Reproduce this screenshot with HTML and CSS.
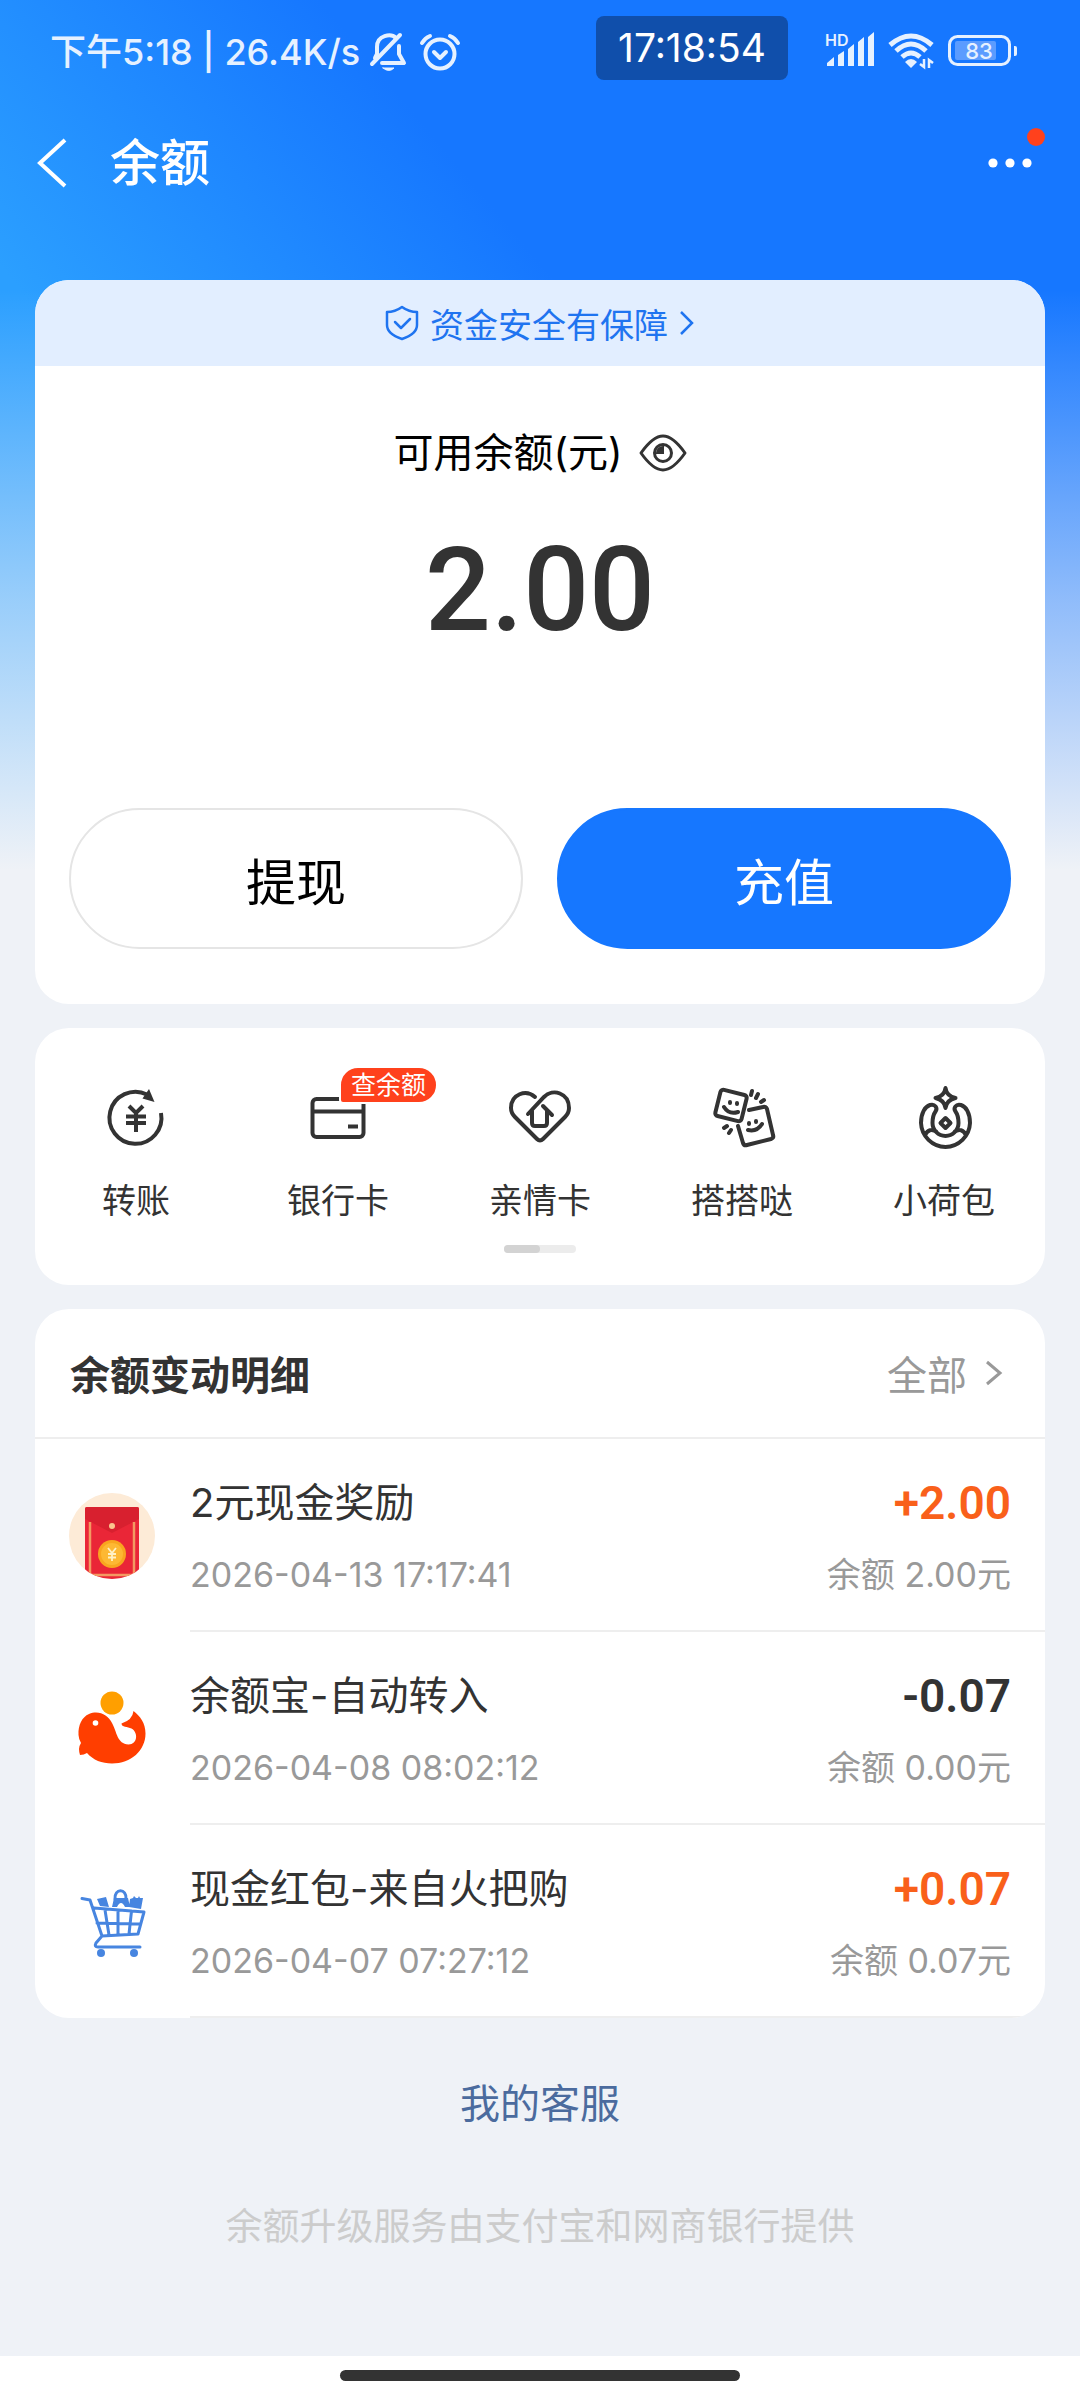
FILE: index.html
```html
<!DOCTYPE html>
<html lang="zh-CN">
<head>
<meta charset="utf-8">
<meta name="viewport" content="width=device-width, initial-scale=1">
<title>余额</title>
<link rel="stylesheet" href="styles.css">
</head>
<body>
<div class="page">
  <div class="status">
    <div class="status-left">
      <span>下午5:18 | 26.4K/s</span>
      <svg class="bell" width="36" height="40" viewBox="0 0 36 40" fill="none" stroke="currentColor" stroke-width="4" stroke-linecap="round" stroke-linejoin="round"><path d="M26 6C21 1 7 3 7 15v7l-2 4M29 14v8l5 9H12"/><path d="M2 32L30 3"/><path d="M13 36h11q-5 5-11 0z" fill="currentColor" stroke-width="1"/></svg>
      <svg class="alarm" width="40" height="38" viewBox="0 0 40 38" fill="none" stroke="currentColor" stroke-width="4" stroke-linecap="round"><circle cx="20" cy="21" r="14.500"/><path d="M14 19l6 6 6-6" stroke-linejoin="round"/><path d="M2 10q3-5 8-7M38 10q-3-5-8-7"/></svg>
    </div>
    <time class="clock">17:18:54</time>
    <div class="status-right">
      <svg width="50" height="36" viewBox="0 0 50 36" fill="currentColor"><text class="hd" x="0" y="13">HD</text><path d="M2 33v-3l7-6v9zM13 33V22l6-4v15zM23 33V16l6-5v22zM33 33V9l6-5v29zM43 33V4l6-5v34z"/></svg>
      <svg class="wifi" width="46" height="36" viewBox="0 0 46 36" fill="none" stroke="currentColor" stroke-width="5"><path d="M2 12Q23-6 44 12M8 18Q23 4 38 18M14 24Q23 16 32 24"/><path d="M17 29q6-6 12 0l-6 6z" fill="currentColor" stroke="none"/><path d="M36 26v8l-4-3M41 35v-8l4 3" stroke-width="2.500"/></svg>
      <svg class="battery" width="70" height="32" viewBox="0 0 70 32" fill="none"><rect x="1.500" y="1.500" width="60" height="28" rx="8" stroke="currentColor" stroke-width="3"/><rect x="7" y="6" width="41" height="19" rx="2" fill="#5b9cff"/><path d="M66 11h1q2 0 2 2v6q0 2-2 2h-1z" fill="currentColor"/><text class="level" x="31" y="24" text-anchor="middle" fill="currentColor">83</text></svg>
    </div>
  </div>

  <header class="nav">
    <button class="back" aria-label="返回"><svg width="30" height="50" viewBox="0 0 30 50" fill="none" stroke="currentColor" stroke-width="4"><path d="M28 2L3 25l25 23"/></svg></button>
    <h1>余额</h1>
    <button class="more" aria-label="更多"><svg width="46" height="12" viewBox="0 0 46 12" fill="currentColor"><circle cx="6" cy="6" r="4.600"/><circle cx="23" cy="6" r="4.600"/><circle cx="40" cy="6" r="4.600"/></svg><span class="dot"></span></button>
  </header>

  <main>
    <section class="card">
      <a class="safety" href="#">
        <svg width="34" height="36" viewBox="0 0 34 36" fill="none" stroke="currentColor" stroke-width="2.500" stroke-linejoin="round"><path d="M17 2q7 5 15 5v13q0 9-15 14Q2 29 2 20V7q8 0 15-5z"/><path d="M10 17l6 6 9-9" stroke-linecap="round"/></svg>
        <span>资金安全有保障</span>
        <svg width="16" height="24" viewBox="0 0 16 24" fill="none" stroke="currentColor" stroke-width="2.500"><path d="M2 1l11 11L2 23"/></svg>
      </a>
      <div class="label">
        <span>可用余额(元)</span>
        <button class="eye" aria-label="隐藏余额"><svg width="48" height="38" viewBox="0 0 48 38" fill="none" stroke="currentColor" stroke-width="3"><path d="M2 19Q14 2 24 2t22 17Q34 36 24 36T2 19z" stroke-linejoin="round"/><circle cx="24" cy="19" r="8.500"/><path d="M24 13v6h-6a6 6 0 0 1 6-6z" fill="currentColor" stroke-width="2"/></svg></button>
      </div>
      <p class="amount">2.00</p>
      <div class="actions">
        <button class="btn">提现</button>
        <button class="btn primary">充值</button>
      </div>
    </section>

    <section class="card shortcuts">
      <nav class="grid">
        <a href="#"><span class="icon"><svg viewBox="0 0 72 72"><path d="M61 31A26 26 0 1 1 47 12.500M29 24l7 7 7-7M36 31v19M26 34.500h20M26 41h20"/><path d="M49 7l5.500 13-12-3.500z" fill="currentColor" stroke="none"/></svg></span>转账</a>
        <a href="#"><span class="icon"><svg viewBox="0 0 72 72"><rect x="10.500" y="17" width="51" height="38" rx="4"/><path d="M10 29.500h52M46 44.500h10"/></svg><em class="badge">查余额</em></span>银行卡</a>
        <a href="#"><span class="icon"><svg viewBox="0 0 72 72" stroke-linecap="round"><path d="M31 15C22 7 7 12 7 26q0 5 4 9l22 22q3 3 6 0l22-22q4-4 4-9C65 11 49 6 40 15L24 32"/><path d="M28 29v12q0 3 3 3h9q3 0 3-3V29M39 24l9 9"/></svg></span>亲情卡</a>
        <a href="#"><span class="icon"><svg viewBox="0 0 72 72" stroke-linecap="round"><rect x="11.500" y="10" width="27" height="27" rx="3" transform="rotate(14 25 23.500)"/><path d="M43 28l14-3q3-1 4 2l6 26q1 3-2 4l-24 6q-3 1-4-2l-5-17"/><path d="M18 25q5 8 14 5M42 48q9 2 14-6"/><path d="M24 20v1M31 21v1M43 41v1M50 39v1M46 9l-1 4M52 12l-2 4M58 18l-3 2M21 44l-3 2M25 48l-2 3"/></svg></span>搭搭哒</a>
        <a href="#"><span class="icon"><svg viewBox="0 0 72 72" stroke-linejoin="round"><path d="M37.500 65A25 25 0 0 1 13 41C13 31 17 24.500 22 23s8 3 5.500 6.500-3 7-3 11.500a13 13 0 0 0 26 0c0-5-.5-8-3-11.500S48 21.500 53 23s9 8 9 18a25 25 0 0 1-24.500 24zM17 53q4-8 12-3M58 53q-4-8-12-3M37.500 36l5 5-5 5-5-5z"/><path d="M37.500 6q1 8 10 10-9 2-10 10-1-8-10-10 9-2 10-10z"/></svg></span>小荷包</a>
      </nav>
      <div class="pager"><span></span></div>
    </section>

    <section class="card">
      <header class="list-head">
        <h2>余额变动明细</h2>
        <a href="#">全部 <svg width="18" height="26" viewBox="0 0 18 26" fill="none" stroke="currentColor" stroke-width="3"><path d="M2 2l13 11L2 24"/></svg></a>
      </header>
      <ul class="list">
        <li>
          <svg class="avatar" viewBox="0 0 86 86"><defs><clipPath id="round"><circle cx="43" cy="43" r="43"/></clipPath></defs><g clip-path="url(#round)"><path fill="#fdebd7" d="M0 0h86v86H0z"/><rect x="16" y="14" width="54" height="76" rx="2" fill="#ea2637"/><path d="M16 16q0-2 2-2h50q2 0 2 2v10L43 40 16 26z" fill="#d8202f"/><path d="M21 29v53M65 29v53M18 82h50" stroke="#f39a62" stroke-width="2.500"/><circle cx="43" cy="33" r="3" fill="#fbc58e"/><circle cx="43" cy="61" r="14" fill="#f9a51f"/><circle cx="43" cy="61" r="11" fill="#fdb833"/><path d="M39 55l4 5 4-5M43 60v8M39 61h8M39 64.500h8" stroke="#fff1c4" stroke-width="1.800" fill="none"/></g></svg>
          <div class="row">
            <div class="what"><h3>2元现金奖励</h3><time>2026-04-13 17:17:41</time></div>
            <div class="sum"><b class="in">+2.00</b><span>余额 2.00元</span></div>
          </div>
        </li>
        <li>
          <svg class="avatar" viewBox="0 0 86 86"><circle cx="43" cy="17" r="11.500" fill="#ff9f00"/><path fill="#ff3e00" d="M20 28C13 31 9 39 9.500 49q.2 4 2.500 8-2 3-2 6 0 3 1 6 4 0 7-2c6 7 15 10.500 25 10.500 19 0 33.500-13 33.500-30C76.500 37 71 30 64.500 25q-1 9-12 12.500c0 4 6 3 10 5 7 4 6 16-3 16C48 58 48 46 43 37c-4-8-13-13-23-9z"/><circle cx="26.500" cy="37" r="2.800" fill="#fff"/></svg>
          <div class="row">
            <div class="what"><h3>余额宝-自动转入</h3><time>2026-04-08 08:02:12</time></div>
            <div class="sum"><b>-0.07</b><span>余额 0.00元</span></div>
          </div>
        </li>
        <li>
          <svg class="avatar" viewBox="0 0 86 86" fill="none" stroke="#4785e0" stroke-width="3" stroke-linecap="round" stroke-linejoin="round"><path d="M13 19.500l8 1.500 12 36 36-2 6-22-50-4M28 44l43 1M36 31l4 25M49 31v25M62.500 32L60 55M33 57l-6 7q-2 4 2 4h42" /><g fill="#4785e0" stroke="none"><circle cx="32" cy="74" r="4"/><circle cx="65" cy="74" r="4"/><path d="M28 20l9-2 3 10-9-1zM61 20l3-1 1-2 2 2h2l1-2 1 2h3l-2 11-12-2zM43 28l2-9h14l2 9h-5q-4-8-8 0z"/></g><path d="M46 20c-1-11 12-11 11 0"/></svg>
          <div class="row">
            <div class="what"><h3>现金红包-来自火把购</h3><time>2026-04-07 07:27:12</time></div>
            <div class="sum"><b class="in">+0.07</b><span>余额 0.07元</span></div>
          </div>
        </li>
      </ul>
    </section>
  </main>

  <footer>
    <a href="#">我的客服</a>
    <p>余额升级服务由支付宝和网商银行提供</p>
  </footer>
  <div class="home"><span></span></div>
</div>
</body>
</html>
```
FILE: styles.css
```css
* { box-sizing: border-box; margin: 0; padding: 0; }
body {
  font-family: Inter, "Noto Sans CJK SC", sans-serif;
  color: #333;
  background: #eff2f7;
}
a { color: inherit; text-decoration: none; }
button { font: inherit; color: inherit; background: none; border: 0; cursor: pointer; }
svg { display: block; flex: none; overflow: visible; }
ul { list-style: none; }

.page {
  min-height: 100vh;
  display: flex;
  flex-direction: column;
  background:
    linear-gradient(to bottom, rgba(239, 242, 247, 0) 290px, rgba(239, 242, 247, .56) 600px, #eff2f7 870px),
    linear-gradient(50deg, #2b9fff 28%, #1677ff 58%) top / 100% 870px no-repeat;
}

/* Phone status bar */
.status {
  display: flex;
  align-items: center;
  height: 96px;
  padding: 0 62px 0 50px;
  color: #e6f1ff;
}
.status-left {
  flex: 1;
  display: flex;
  align-items: center;
  font-size: 36px;
  font-weight: 500;
  line-height: 48px;
  padding-top: 8px;
  white-space: nowrap;
}
.bell { margin-left: 10px; }
.alarm { margin-left: 14px; }
.clock {
  padding: 0 22px;
  border-radius: 8px;
  background: #104fab;
  color: #fff;
  font-size: 39px;
  line-height: 64px;
}
.status-right {
  display: flex;
  align-items: center;
  margin-left: 37px;
  padding-top: 6px;
}
.wifi { margin-left: 13px; }
.battery { margin-left: 14px; }
.hd { font-size: 16px; font-weight: 600; }
.level { font-size: 22px; font-weight: 500; }

.nav {
  display: flex;
  align-items: center;
  height: 134px;
  padding: 0 47px 0 37px;
  color: #fff;
}
.back { width: 73px; }
.nav h1 { flex: 1; font-size: 50px; font-weight: 500; line-height: 64px; }
.more { position: relative; }
.dot {
  position: absolute;
  right: -12px;
  top: -29px;
  width: 18px;
  height: 18px;
  border-radius: 50%;
  background: #ff411c;
}

main {
  display: flex;
  flex-direction: column;
  gap: 24px;
  padding: 50px 35px 0;
}
.card { background: #fff; border-radius: 34px; overflow: hidden; }

.safety {
  display: flex;
  align-items: center;
  justify-content: center;
  gap: 11px;
  height: 86px;
  background: #e2eeff;
  color: #1f74f0;
  font-size: 34px;
}
.label {
  display: flex;
  align-items: center;
  justify-content: center;
  gap: 16px;
  margin-top: 57px;
  font-size: 40px;
  line-height: 60px;
  color: #000;
}
.eye { color: #333; }
.amount {
  margin-top: 47px;
  text-align: center;
  font-family: Roboto, sans-serif;
  font-size: 116px;
  font-weight: 500;
  line-height: 120px;
}
.actions {
  display: grid;
  grid-template-columns: 1fr 1fr;
  gap: 34px;
  padding: 158px 34px 55px;
}
.btn {
  height: 141px;
  border: 2px solid #e5e5e5;
  border-radius: 71px;
  color: #000;
  font-size: 50px;
}
.primary { background: #1677ff; border-color: #1677ff; color: #fff; }

.shortcuts { padding: 54px 0 32px; }
.grid { display: grid; grid-template-columns: repeat(5, 1fr); }
.grid a {
  display: flex;
  flex-direction: column;
  align-items: center;
  gap: 23px;
  font-size: 34px;
  line-height: 48px;
}
.icon { position: relative; width: 72px; height: 72px; }
.icon svg { width: 72px; height: 72px; fill: none; stroke: currentColor; stroke-width: 4; }
.badge {
  position: absolute;
  left: 37px;
  top: -16px;
  padding: 0 10px;
  border: 2px solid #fff;
  border-radius: 19px 19px 19px 4px;
  background: #ff411c;
  color: #fff;
  font-size: 25px;
  font-style: normal;
  line-height: 34px;
  white-space: nowrap;
}
.pager {
  width: 72px;
  height: 8px;
  margin: 20px auto 0;
  border-radius: 4px;
  background: #ececec;
}
.pager span { display: block; width: 50%; height: 100%; border-radius: 4px; background: #d3d3d3; }

.list-head {
  display: flex;
  align-items: center;
  justify-content: space-between;
  height: 130px;
  padding: 0 42px 0 35px;
  border-bottom: 2px solid #eee;
}
.list-head h2 { font-size: 40px; font-weight: 700; }
.list-head a { display: flex; align-items: center; gap: 18px; font-size: 40px; color: #999; }

.list li { display: flex; align-items: center; padding-left: 34px; }
.avatar { width: 86px; height: 86px; }
.row {
  flex: 1;
  display: flex;
  justify-content: space-between;
  margin-left: 35px;
  padding: 36px 34px 31px 0;
  border-bottom: 2px solid #eee;
}
.what, .sum { display: flex; flex-direction: column; gap: 20px; }
.sum { align-items: flex-end; }
.what h3 { font-size: 40px; font-weight: 400; line-height: 56px; }
.what time, .sum span { font-size: 34px; line-height: 48px; color: #999; }
.sum b { font-family: Roboto, sans-serif; font-size: 46px; font-weight: 600; line-height: 56px; }
.sum .in { color: #f9601a; }

footer { flex: 1; padding: 58px 35px; text-align: center; }
footer a { font-size: 40px; line-height: 56px; color: #4b6b9e; }
footer p { margin-top: 69px; font-size: 37px; line-height: 52px; color: #ccc; }

.home { display: flex; justify-content: center; padding: 14px 0 19px; background: #fff; }
.home span { width: 37%; height: 11px; border-radius: 6px; background: #333; }
```
